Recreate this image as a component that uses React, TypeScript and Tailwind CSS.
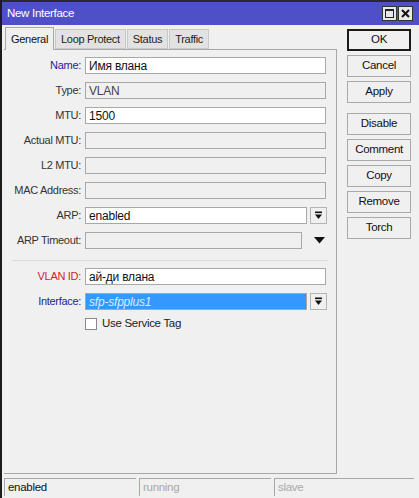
import React from "react";

type Row = {
  label: string;
  value?: string;
  labelColor?: string;
  enabled?: boolean;
  kind?: "text" | "select" | "timeout" | "selected";
};

const rows: Row[] = [
  { label: "Name:", value: "Имя влана", labelColor: "text-[#24249a]", enabled: true },
  { label: "Type:", value: "VLAN" },
  { label: "MTU:", value: "1500", enabled: true },
  { label: "Actual MTU:" },
  { label: "L2 MTU:" },
  { label: "MAC Address:" },
  { label: "ARP:", value: "enabled", enabled: true, kind: "select" },
  { label: "ARP Timeout:", kind: "timeout" },
];

const vlanRows: Row[] = [
  { label: "VLAN ID:", value: "ай-ди влана", labelColor: "text-[#d21f1f]", enabled: true },
  { label: "Interface:", value: "sfp-sfpplus1", labelColor: "text-[#24249a]", kind: "selected" },
];

const buttons = [["OK", "Cancel", "Apply"], ["Disable", "Comment", "Copy", "Remove", "Torch"]];

const tabs = ["Loop Protect", "Status", "Traffic"];

const DropIcon = () => (
  <svg width="9" height="9" viewBox="0 0 9 9">
    <rect x="1" y="0.5" width="7" height="1.6" fill="#111" />
    <path d="M1 3.5 H8 L4.5 8 Z" fill="#111" />
  </svg>
);

const FieldRow = ({ row }: { row: Row }) => {
  const kind = row.kind ?? "text";
  const boxClass =
    kind === "selected"
      ? "bg-[#3399ff] text-[#d8ecff] italic border-[#a8a8a8]"
      : row.enabled
        ? "bg-white text-[#111] border-[#a8a8a8]"
        : "bg-[#f0f0f0] text-[#444] border-[#a8a8a8]";
  return (
    <div className="flex items-center h-[17px]">
      <div className={`w-[77px] text-right ${row.labelColor ?? "text-[#333]"}`}>{row.label}</div>
      <div
        className={`ml-[4px] h-[17px] border flex items-center px-[3px] text-[12px] tracking-[-0.2px] ${boxClass} ${
          kind === "select" || kind === "selected" ? "w-[222px]" : kind === "timeout" ? "w-[217px]" : "w-[241px]"
        }`}
      >
        {row.value}
      </div>
      {(kind === "select" || kind === "selected") && (
        <div className="ml-[3px] w-[17px] h-[17px] border border-[#b4b4b4] bg-[#f0f0f0] flex items-center justify-center">
          <DropIcon />
        </div>
      )}
      {kind === "timeout" && (
        <div className="ml-[12px] flex items-center">
          <svg width="11" height="7" viewBox="0 0 11 7">
            <path d="M0 0 H11 L5.5 6.5 Z" fill="#111" />
          </svg>
        </div>
      )}
    </div>
  );
};

export default function App() {
  return (
    <div
      className="w-[419px] h-[498px] bg-[#f0f0f0] border-l-2 border-[#1c1c1c] flex flex-col overflow-hidden text-[11px] tracking-[-0.3px]"
      style={{ fontFamily: '"Liberation Sans", Arial, sans-serif' }}
    >
      <div className="h-[2px] bg-[#2a2a2a] shrink-0" />
      <div className="h-[23px] bg-[#4f4fc8] flex items-center justify-between pl-[5px] pr-[6px] shrink-0">
        <span className="text-white text-[11.5px] tracking-[-0.3px]">New Interface</span>
        <div className="flex gap-[1px]">
          <div className="w-[15px] h-[15px] bg-[#e8e8e8] border border-[#333] flex items-center justify-center">
            <div className="w-[9px] h-[9px] border border-[#222] border-t-2" />
          </div>
          <div className="w-[15px] h-[15px] bg-[#e8e8e8] border border-[#333] flex items-center justify-center">
            <svg width="9" height="9" viewBox="0 0 9 9">
              <path d="M1 1 L8 8 M8 1 L1 8" stroke="#111" strokeWidth="2" />
            </svg>
          </div>
        </div>
      </div>

      <div className="flex flex-1 pt-[2px]">
        <div className="ml-[2px] w-[333px] flex flex-col">
          <div className="flex items-end h-[22px] pl-[1px]">
            <div className="h-[23px] -mb-[1px] px-[5px] flex items-center border border-b-0 border-[#a8a8a8] bg-[#f0f0f0] text-[#111] relative z-10">
              General
            </div>
            {tabs.map((t) => (
              <div
                key={t}
                className="ml-[1px] h-[20px] px-[5px] flex items-center border border-[#c8c8c8] bg-[#e2e2e2] text-[#222]"
              >
                {t}
              </div>
            ))}
          </div>
          <div className="h-[425px] border border-[#a8a8a8] border-l-0 pt-[7px] flex flex-col">
            <div className="flex flex-col gap-[8px]">
              {rows.map((r) => (
                <FieldRow key={r.label} row={r} />
              ))}
            </div>
            <div className="mt-[11px] mb-[7px] ml-[8px] w-[316px] h-px bg-[#dadada]" />
            <div className="flex flex-col gap-[8px]">
              {vlanRows.map((r) => (
                <FieldRow key={r.label} row={r} />
              ))}
            </div>
            <div className="mt-[7px] ml-[81px] flex items-center h-[14px]">
              <div className="w-[12px] h-[12px] border border-[#8a8a8a] bg-white" />
              <span className="ml-[5px] text-[#222] text-[11.5px]">Use Service Tag</span>
            </div>
          </div>
        </div>

        <div className="ml-[10px] mt-[2px] flex flex-col gap-[10px]">
          {buttons.map((group, gi) => (
            <div key={gi} className="flex flex-col gap-[4px]">
              {group.map((b) => (
                <div
                  key={b}
                  className={`w-[64px] h-[22px] flex items-center justify-center bg-[#f0f0f0] text-[#111] text-[11.5px] ${
                    b === "OK" ? "border-2 border-[#1a1a1a]" : "border border-[#a8a8a8]"
                  }`}
                >
                  {b}
                </div>
              ))}
            </div>
          ))}
        </div>
      </div>

      <div className="flex gap-[3px] pl-[2px] pr-[5px] pb-[2px] h-[22px] shrink-0 pt-[2px]">
        <div className="w-[132px] border-l border-t border-[#a8a8a8] flex items-center px-[3px] text-[#111] text-[11.5px]">enabled</div>
        <div className="w-[132px] border-l border-t border-[#a8a8a8] flex items-center px-[3px] text-[#a8a8a8] text-[11.5px]">running</div>
        <div className="flex-1 border-l border-t border-[#a8a8a8] flex items-center px-[3px] text-[#a8a8a8] text-[11.5px]">slave</div>
      </div>
    </div>
  );
}
